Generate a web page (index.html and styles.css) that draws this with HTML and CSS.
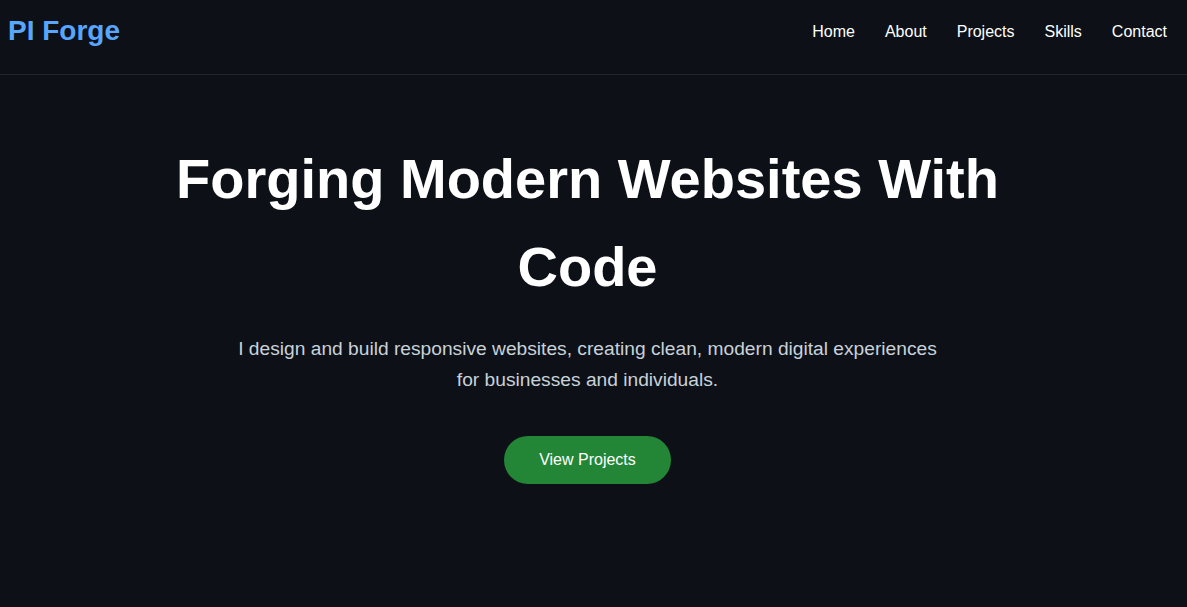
FILE: index.html
```html
<!DOCTYPE html>
<html lang="en">
<head>
<meta charset="utf-8">
<title>PI Forge</title>
<link rel="stylesheet" href="styles.css">
</head>
<body>
<header class="site-header">
  <div class="logo">PI Forge</div>
  <nav class="nav">
    <a href="#">Home</a>
    <a href="#">About</a>
    <a href="#">Projects</a>
    <a href="#">Skills</a>
    <a href="#">Contact</a>
  </nav>
</header>
<main class="hero">
  <h1 class="hero-title">Forging Modern Websites With Code</h1>
  <p class="hero-text">I design and build responsive websites, creating clean, modern digital experiences for businesses and individuals.</p>
  <a class="btn" href="#">View Projects</a>
</main>
</body>
</html>
```
FILE: styles.css
```css
* { box-sizing: border-box; }
html, body { margin: 0; padding: 0; }
body {
  background: #0d1117;
  color: #ffffff;
  font-family: "Liberation Sans", Arial, sans-serif;
  height: 607px;
  overflow: hidden;
}
.site-header {
  display: flex;
  align-items: center;
  justify-content: space-between;
  height: 75px;
  padding: 0 20px 0 8px;
  border-bottom: 1px solid #21262d;
}
.logo {
  color: #58a6ff;
  font-size: 28px;
  font-weight: bold;
  margin-top: -12px;
}
.nav {
  display: flex;
  gap: 30px;
  margin-top: -11px;
}
.nav a {
  color: #ffffff;
  text-decoration: none;
  font-size: 16px;
}
.hero {
  display: flex;
  flex-direction: column;
  align-items: center;
  text-align: center;
  padding: 60px 12px 0 0;
}
.hero-title {
  margin: 0;
  font-size: 56px;
  line-height: 88px;
  max-width: 900px;
  font-weight: bold;
}
.hero-text {
  margin: 22px 0 0;
  max-width: 700px;
  font-size: 19.2px;
  line-height: 31px;
  color: #c9d1d9;
}
.btn {
  margin-top: 41px;
  display: inline-block;
  background: #238636;
  color: #ffffff;
  text-decoration: none;
  font-size: 16px;
  line-height: 18px;
  padding: 15px 35px;
  border-radius: 30px;
}
```
